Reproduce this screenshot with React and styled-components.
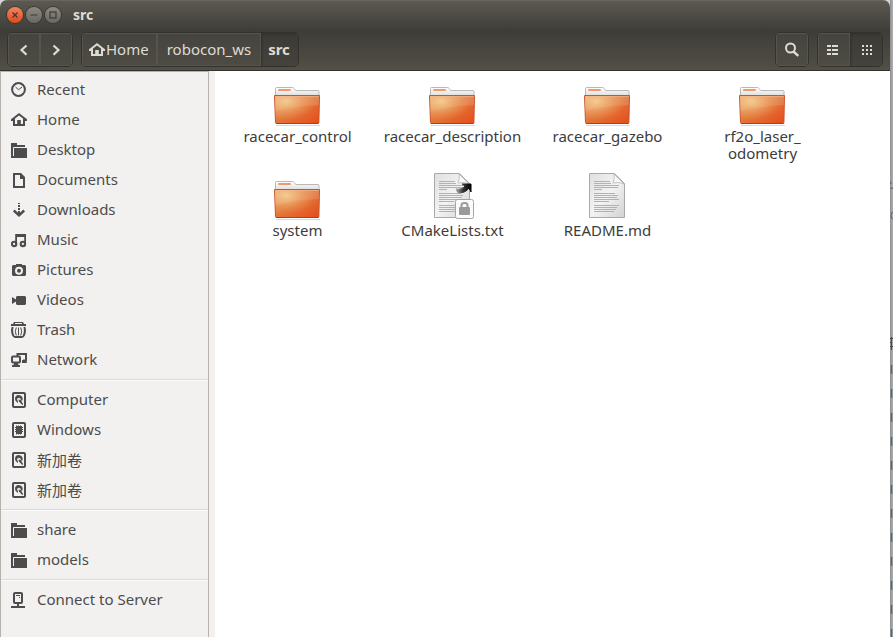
import React, {useState} from 'react';
import styled, {createGlobalStyle, css} from 'styled-components';

const places = [
    [
        {name: 'Recent', icon: 'recent'},
        {name: 'Home', icon: 'home'},
        {name: 'Desktop', icon: 'folder'},
        {name: 'Documents', icon: 'document'},
        {name: 'Downloads', icon: 'download'},
        {name: 'Music', icon: 'music'},
        {name: 'Pictures', icon: 'camera'},
        {name: 'Videos', icon: 'video'},
        {name: 'Trash', icon: 'trash'},
        {name: 'Network', icon: 'network'},
    ],
    [
        {name: 'Computer', icon: 'disk'},
        {name: 'Windows', icon: 'chip'},
        {name: '新加卷', icon: 'disk'},
        {name: '新加卷', icon: 'disk'},
    ],
    [
        {name: 'share', icon: 'folder'},
        {name: 'models', icon: 'folder'},
    ],
    [
        {name: 'Connect to Server', icon: 'server'},
    ],
];

const files = [
    {name: 'racecar_control', type: 'folder'},
    {name: 'racecar_description', type: 'folder'},
    {name: 'racecar_gazebo', type: 'folder'},
    {name: 'rf2o_laser_odometry', type: 'folder', lines: ['rf2o_laser_', 'odometry']},
    {name: 'system', type: 'folder'},
    {name: 'CMakeLists.txt', type: 'text', linked: true},
    {name: 'README.md', type: 'text'},
];

const shapes = {
    recent: <>
        <circle cx="7.5" cy="7.5" r="6.4" fill="none" stroke="currentColor" strokeWidth="2"/>
        <path d="M4.5 5l3 2.7L11 5" fill="none" stroke="currentColor" strokeWidth="1"/>
    </>,
    home: <path
        d="M8 1L0 7.2V9h2v5h12V9h2V7.2zM8 3.4l4 3.2V12h-2.2V8H6.2v4H4V6.6z"
        fill="currentColor" fillRule="evenodd"/>,
    folder: <>
        <path d="M0 1h6v2h8v2H3v11H0z" fill="currentColor"/>
        <path d="M3 6h13v10H2V5h1z" fill="currentColor"/>
        <path d="M2.5 14V5.5H14" fill="none" stroke="#f2f1f0" strokeWidth="1"/>
    </>,
    document: <path
        d="M2 1h8l4 4v11H2zM4 3v11h8V7H9V3z"
        fill="currentColor" fillRule="evenodd"/>,
    download: <>
        <path d="M7 1h2v1H7zM7 3h2v2H7zM7 6h2v2H7z" fill="currentColor"/>
        <path d="M7 9h2v3H7z" fill="currentColor"/>
        <path d="M2.8 8.5L8 13.3l5.2-4.8" fill="none" stroke="currentColor" strokeWidth="2.4"/>
    </>,
    music: <>
        <path d="M5.1 12V3h9v9" fill="none" stroke="currentColor" strokeWidth="1.8"/>
        <path d="M5 2h10v3H5z" fill="currentColor"/>
        <circle cx="3.1" cy="11.9" r="2.2" fill="none" stroke="currentColor" strokeWidth="2.1"/>
        <circle cx="11.9" cy="11.9" r="2.2" fill="none" stroke="currentColor" strokeWidth="2.1"/>
    </>,
    camera: <>
        <path d="M2 3h3V2h6v1h3l1 1v9l-1 1H2l-1-1V4z" fill="currentColor"/>
        <circle cx="8" cy="8.8" r="3" fill="none" stroke="#f2f1f0" strokeWidth="2"/>
    </>,
    video: <path d="M6 4h8l1 1v7l-1 1H6l-1-1V9.5L1 12V5l4 2.5V5z" fill="currentColor"/>,
    trash: <>
        <path d="M0 2h2l1-2h9l1 2h2v2H0zM4 1.1v.9h7v-.9z" fill="currentColor" fillRule="evenodd"/>
        <path d="M1.7 5Q.2 9.500 2.200 13.500q.6 1.500 2 1.500h6.600q1.400 0 2-1.500Q14.800 9.500 13.300 5" fill="none" stroke="currentColor" strokeWidth="2"/>
        <path d="M5.300 5.500q-2 4 0 8M7.500 5.500v8M9.700 5.500q2 4 0 8" fill="none" stroke="currentColor" strokeWidth="1"/>
    </>,
    network: <>
        <path d="M6.500 4V2h8.500v6.500h-3" fill="none" stroke="currentColor" strokeWidth="2"/>
        <path d="M11 8h4l1 3h-5z" fill="currentColor"/>
        <rect x="1" y="4.500" width="8" height="6" rx="1" fill="none" stroke="currentColor" strokeWidth="2"/>
        <path d="M3 11h4v1.500l2 .8V15H1v-1.700l2-.8z" fill="currentColor"/>
    </>,
    disk: <>
        <rect x="2" y="1" width="12" height="14" rx="1" fill="none" stroke="currentColor" strokeWidth="2"/>
        <path d="M7.500 3Q4 3.300 4 7q0 2.600 3 4V9L6 8l.3-1.500L8 5.800l1.500.7.5 2h1.500Q12.600 3.500 7.500 3z" fill="currentColor"/>
        <path d="M7.500 7.500L9.800 8l2.400 4.300-1 .7L8 9.500z" fill="currentColor"/>
    </>,
    chip: <>
        <rect x="2" y="1" width="12" height="14" rx="1" fill="none" stroke="currentColor" strokeWidth="2"/>
        <path d="M5 4h6v8H5z" fill="currentColor"/>
        <path d="M4 5.500h8M4 7.500h8M4 9.500h8M5.500 3.500v9M7.500 3.500v9M9.500 3.500v9" stroke="currentColor" strokeWidth="1"/>
    </>,
    server: <>
        <rect x="3" y="1" width="8" height="10" rx="1" fill="none" stroke="currentColor" strokeWidth="2"/>
        <path d="M5 3h4v1H5zM8 5h1v1H8zM6 11h2v3h6v2H0v-2h6z" fill="currentColor"/>
    </>,
    back: <path d="M10.500 3.500L5.500 8l5 4.800" fill="none" stroke="currentColor" strokeWidth="2.200"/>,
    forward: <path d="M5.500 3.500l5 4.500-5 4.800" fill="none" stroke="currentColor" strokeWidth="2.200"/>,
    search: <>
        <circle cx="6.500" cy="6" r="4.500" fill="none" stroke="currentColor" strokeWidth="2"/>
        <path d="M9.500 9.500l4.800 4.300" stroke="currentColor" strokeWidth="2.400"/>
    </>,
    list: <path
        d="M1 3h4v2H1zM6 3h6v2H6zM1 7h4v2H1zM6 7h6v2H6zM1 11h4v2H1zM6 11h6v2H6z"
        fill="currentColor"/>,
    grid: <path
        d="M4 3h2v2H4zM8 3h2v2H8zM12 3h2v2h-2zM4 7h2v2H4zM8 7h2v2H8zM12 7h2v2h-2zM4 11h2v2H4zM8 11h2v2H8zM12 11h2v2h-2z"
        fill="currentColor"/>,
    close: <path d="M5.500 5.500l5 5M10.500 5.500l-5 5" stroke="currentColor" strokeWidth="1.300"/>,
    minimize: <path d="M4.500 8h7" stroke="currentColor" strokeWidth="1.200"/>,
    maximize: <rect x="5" y="5" width="6" height="6" fill="none" stroke="currentColor" strokeWidth="1.200"/>,
};

function Icon({name}) {
    return <Glyph viewBox="0 0 16 16" aria-hidden="true">{shapes[name]}</Glyph>;
}

function FolderPicture() {
    return <Picture viewBox="0 -1 48 48" aria-hidden="true">
        <defs>
            <linearGradient id="folderFront" x1="0" y1="0" x2="1" y2="1">
                <stop offset="0" stopColor="#eda567"/>
                <stop offset=".5" stopColor="#e2753a"/>
                <stop offset="1" stopColor="#e64a19"/>
            </linearGradient>
            <radialGradient id="folderGlow" cx=".25" cy=".2" r=".7">
                <stop offset="0" stopColor="#f3d298" stopOpacity=".9"/>
                <stop offset="1" stopColor="#f0a05c" stopOpacity="0"/>
            </radialGradient>
            <linearGradient id="folderPaper" x1="0" y1="0" x2="0" y2="1">
                <stop offset="0" stopColor="#ffffff"/>
                <stop offset="1" stopColor="#dadada"/>
            </linearGradient>
        </defs>
        <path d="M2 46h44v1H2z" fill="#000" opacity=".15"/>
        <path d="M1.500 18V9.500q0-1 1-1h16q1 0 1.700 1l1.600 2H44q1 0 1 1V18z" fill="url(#folderPaper)" stroke="#b9b9b9"/>
        <rect x="4" y="10" width="13" height="2" rx="1" fill="#f19a68"/>
        <path d="M.5 16.500h45l-.6 27q0 1-1 1H2.500q-1 0-1-1z" fill="url(#folderFront)" stroke="#c8552c"/>
        <path d="M1 17h44l-.2 9Q22 27 1.300 32z" fill="#fff" opacity=".13"/>
        <path d="M1 17h44v27H2z" fill="url(#folderGlow)"/>
        <path d="M1 17.500h44" stroke="#f7b58c" opacity=".6"/>
        <path d="M2 44.500h42.500" stroke="#bd3812"/>
    </Picture>;
}

function TextPicture({linked}) {
    return <Picture viewBox="1 0 48 48" aria-hidden="true">
        <defs>
            <linearGradient id="paper" x1="0" y1="0" x2="1" y2="1">
                <stop offset="0" stopColor="#dfdfdf"/>
                <stop offset=".5" stopColor="#f3f3f3"/>
                <stop offset="1" stopColor="#d2d2d2"/>
            </linearGradient>
            <linearGradient id="arrow" x1="0" y1="0" x2="1" y2="0">
                <stop offset="0" stopColor="#aaa"/>
                <stop offset=".5" stopColor="#333"/>
                <stop offset="1" stopColor="#000"/>
            </linearGradient>
        </defs>
        <path d="M6.500 1.500h25l10 10v34h-35z" fill="url(#paper)" stroke="#aaa"/>
        <path d="M31 2q1 5-1 9 6-1.500 11 1z" fill="#fafafa" stroke="#b5b5b5" strokeWidth=".8"/>
        <path
            d="M11 9.500h16M11 11.500h17M11 13.500h25M11 15.500h24M11 17.500h8M11 21.500h21M11 23.500h24M11 25.500h23M11 27.500h25M11 29.500h15M11 33.500h25M11 35.500h23M11 37.500h22M11 39.500h20"
            stroke="#b2b2b2"/>
        {linked && <>
            <path d="M28 17q1 6 8 3 3-1 5-4l2 4V12h-9l3 2q-3 4-9 3z" fill="url(#arrow)" stroke="url(#arrow)"/>
            <rect x="27.500" y="27.500" width="18" height="19" rx="2" fill="#fbfbfb" stroke="#a5a5a5"/>
            <rect x="31" y="35" width="11" height="8" rx="1" fill="#989b96"/>
            <path d="M33.500 35v-2q0-2 3-2t3 2v2" fill="none" stroke="#989b96" strokeWidth="2"/>
        </>}
    </Picture>;
}

function App() {
    const [view, setView] = useState('grid');

    return <Desktop>
        <GlobalStyle/>
        <Window>
            <Header>
                <TitleBar>
                    <WindowButton $close aria-label="Close"><Icon name="close"/></WindowButton>
                    <WindowButton aria-label="Minimize"><Icon name="minimize"/></WindowButton>
                    <WindowButton aria-label="Maximize"><Icon name="maximize"/></WindowButton>
                    <Title>src</Title>
                </TitleBar>

                <Toolbar>
                    <ButtonGroup>
                        <ToolButton aria-label="Back"><Icon name="back"/></ToolButton>
                        <ToolButton aria-label="Forward"><Icon name="forward"/></ToolButton>
                    </ButtonGroup>
                    <ButtonGroup as="nav">
                        <Crumb><Icon name="home"/><Label>Home</Label></Crumb>
                        <Crumb $wide><Label>robocon_ws</Label></Crumb>
                        <Crumb $active><Label>src</Label></Crumb>
                    </ButtonGroup>
                    <Spacer/>
                    <ButtonGroup>
                        <ToolButton aria-label="Search"><Icon name="search"/></ToolButton>
                    </ButtonGroup>
                    <ButtonGroup>
                        <ToolButton $active={view === 'list'} aria-label="List view" onClick={() => setView('list')}>
                            <Icon name="list"/>
                        </ToolButton>
                        <ToolButton $active={view === 'grid'} aria-label="Icon view" onClick={() => setView('grid')}>
                            <Icon name="grid"/>
                        </ToolButton>
                    </ButtonGroup>
                </Toolbar>
            </Header>

            <Body>
                <Sidebar>
                    {places.map((group, index) => (
                        <PlaceGroup key={index}>
                            {group.map((place, i) => (
                                <li key={i}>
                                    <Place href="#"><Icon name={place.icon}/><Label>{place.name}</Label></Place>
                                </li>
                            ))}
                        </PlaceGroup>
                    ))}
                </Sidebar>

                <Files>
                    {files.map((file) => (
                        <File key={file.name}>
                            {file.type === 'folder' ? <FolderPicture/> : <TextPicture linked={file.linked}/>}
                            <FileName>
                                {file.lines ? <>{file.lines[0]}<wbr/>{file.lines[1]}</> : file.name}
                            </FileName>
                        </File>
                    ))}
                </Files>
            </Body>
        </Window>

        <Behind aria-hidden="true">
            <Scraps viewBox="0 0 3 358">
                <path d="M0 182h1v2H0zM0 188h3M0 188.500h3" fill="#4a5578" stroke="#6c7080"/>
                <path d="M3 212q-2 0-2 3.500t2 3.500" fill="none" stroke="#5d607c"/>
                <path d="M0 338.500h3M0 342.500h2M1.500 337v13M0 346.500h3" fill="none" stroke="#454b45"/>
            </Scraps>
            {Array.from({length: 12}, (_, i) => <span key={i}>l</span>)}
        </Behind>
    </Desktop>;
}

const GlobalStyle = createGlobalStyle`
  * {
    box-sizing: border-box;
  }

  body {
    margin: 0;
    font-family: "Noto Sans", "Noto Sans CJK SC", sans-serif;
    font-size: 15px;
    color: #3c3c3c;
  }

  button {
    font: inherit;
    border: none;
    padding: 0;
  }
`;

const Desktop = styled.div`
  display: flex;
  height: 100vh;
  overflow: hidden;
  background: #d5d5d5;
`;

const Window = styled.div`
  flex: 1;
  min-width: 0;
  display: flex;
  flex-direction: column;
`;

const Header = styled.header`
  border-bottom: 1px solid #34332e;
  border-radius: 7px 7px 0 0;
  overflow: hidden;
  color: #dfdbd2;
`;

const TitleBar = styled.div`
  display: flex;
  align-items: center;
  gap: 3px;
  height: 29px;
  padding: 0 7px;
  background: linear-gradient(#5b5951, #403f3a);
  border-top: 1px solid #68655c;
`;

const WindowButton = styled.button`
  width: 16px;
  height: 16px;
  border-radius: 50%;
  color: #3c3b37;
  background: ${(props) => props.$close ? 'linear-gradient(#f58462, #e0491b)' : 'linear-gradient(#8b8981, #6a6861)'};
  box-shadow: 0 0 0 1px #3a3934;
`;

const Title = styled.h1`
  margin: 0 0 0 9px;
  font-size: 14px;
  line-height: 20px;
`;

const Toolbar = styled.div`
  display: flex;
  align-items: center;
  gap: 8px;
  height: 41px;
  padding: 0 7px;
  background: linear-gradient(#3d3c37, #524f47);
`;

const ButtonGroup = styled.div`
  display: flex;
  height: 35px;
  border: 1px solid #33322d;
  border-radius: 5px;
  overflow: hidden;
`;

const pressed = css`
  background: linear-gradient(#3b3a35, #45433d);
  box-shadow: inset 1px 1px 2px #302f2b;
`;

const ToolButton = styled.button`
  width: 32px;
  color: #dfdbd2;
  background: linear-gradient(#45443f, #4d4b44);
  box-shadow: inset 0 0 0 1px #56544d;
  ${(props) => props.$active && pressed}
`;

const Crumb = styled.button`
  display: flex;
  align-items: center;
  gap: 1px;
  padding: 0 ${(props) => props.$wide ? 10 : 8}px 0 ${(props) => props.$wide ? 10 : 7}px;
  color: #dfdbd2;
  background: linear-gradient(#45443f, #4d4b44);
  box-shadow: inset 0 0 0 1px #56544d;
  font-weight: ${(props) => props.$active ? 700 : 400};
  ${(props) => props.$active && pressed}
`;

const Label = styled.span`
  padding-bottom: 2px;
`;

const Spacer = styled.div`
  flex: 1;
`;

const Body = styled.div`
  flex: 1;
  display: flex;
  min-height: 0;
  background: #f2f1f0;
`;

const Sidebar = styled.nav`
  width: 209px;
  margin-right: 6px;
  padding-top: 3px;
  border: 1px solid #b6b2ab;
  border-bottom: none;
`;

const PlaceGroup = styled.ul`
  margin: 0;
  padding: 0;
  list-style: none;

  & + & {
    margin-top: 4px;
    padding-top: 5px;
    border-top: 1px solid #dadada;
    box-shadow: inset 0 1px #fbfbfb;
  }
`;

const Place = styled.a`
  display: flex;
  align-items: center;
  gap: 10px;
  height: 30px;
  padding-left: 10px;
  color: #4c4c4c;
  text-decoration: none;
`;

const Files = styled.main`
  flex: 1;
  display: grid;
  grid-template-columns: repeat(auto-fill, 155px);
  align-content: start;
  row-gap: 10px;
  padding: 7px 0 0 5px;
  background: white;
`;

const File = styled.figure`
  display: flex;
  flex-direction: column;
  align-items: center;
  gap: 2px;
  min-height: 84px;
  margin: 0;
`;

const FileName = styled.figcaption`
  max-width: 140px;
  line-height: 17px;
  text-align: center;
`;

const Glyph = styled.svg`
  display: block;
  flex: none;
  width: 16px;
  height: 16px;
  margin: 0 auto;

  ${Crumb} &, ${Place} & {
    margin: 0;
  }
`;

const Picture = styled.svg`
  width: 48px;
  height: 48px;
`;

// sliver of the editor that is open under this window
const Behind = styled.div`
  display: flex;
  flex-direction: column;
  width: 3px;
  background: linear-gradient(90deg, #8f8f8f, #b0b0b0);
  color: #4a5578;
  font: 13px/24px "Liberation Sans", sans-serif;
`;

const Scraps = styled.svg`
  flex: none;
  width: 3px;
  height: 358px;
`;

export default App;
